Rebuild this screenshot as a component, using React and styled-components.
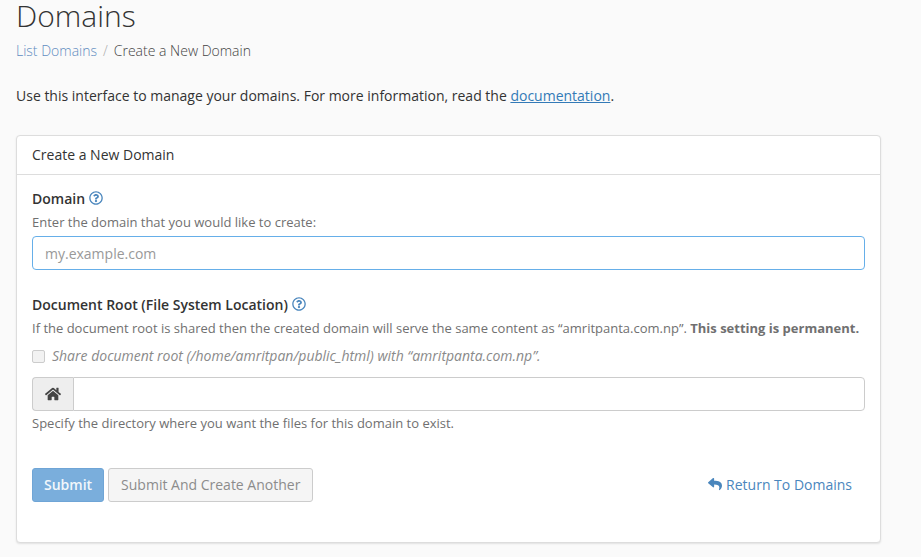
import React from 'react'
import styled, { createGlobalStyle } from 'styled-components'
import { FaHome, FaReply, FaRegQuestionCircle } from 'react-icons/fa'

const GlobalStyle = createGlobalStyle`
  html, body {
    margin: 0;
    padding: 0;
    background: #fafafa;
    overflow: hidden;
  }
  body {
    font-family: "Open Sans", "Liberation Sans", sans-serif;
    font-size: 14px;
    color: #333;
  }
`

const Page = styled.div`
  width: 921px;
  height: 557px;
  box-sizing: border-box;
  padding: 0 40px 0 16px;
  overflow: hidden;
`

const Title = styled.h1`
  margin: 0;
  font-size: 30px;
  line-height: 32px;
  font-weight: 300;
  color: #333;
`

const Breadcrumb = styled.div`
  display: flex;
  margin-top: 9px;
  line-height: 20px;
  font-weight: 300;
  color: #444;
  height: 20px;
`

const Crumb = styled.a`
  color: #5f8cc0;
`

const Slash = styled.span`
  color: #aaa;
  padding: 0 6px;
`

const Intro = styled.p`
  margin: 25px 0 0;
  line-height: 20px;
  color: #333;
`

const DocLink = styled.a`
  color: #337ab7;
  text-decoration: underline;
`

const Card = styled.section`
  margin-top: 29px;
  height: 408px;
  box-sizing: border-box;
  background: #fff;
  border: 1px solid #ddd;
  border-radius: 4px;
  box-shadow: 0 1px 2px rgba(0, 0, 0, 0.1);
`

const CardHeader = styled.header`
  height: 39px;
  box-sizing: border-box;
  padding: 0 15px 2px;
  display: flex;
  align-items: center;
  border-bottom: 1px solid #ddd;
  color: #333;
`

const CardBody = styled.div`
  padding: 13px 15px 0;
`

const Label = styled.label`
  display: flex;
  align-items: center;
  gap: 4px;
  height: 20px;
  font-weight: 600;
  color: #333;
`

const HelpIcon = styled(FaRegQuestionCircle)`
  width: 14px;
  height: 14px;
  color: #4a86bd;
`

const Help = styled.div`
  font-size: 13px;
  line-height: 18px;
  color: #707070;
  margin-top: ${p => p.$top || 0}px;
`

const TextInput = styled.input`
  display: block;
  width: 100%;
  height: 34px;
  box-sizing: border-box;
  padding: 6px 12px;
  font: inherit;
  color: #555;
  background: #fff;
  border: 1px solid ${p => (p.$focused ? '#66afe9' : '#ccc')};
  border-radius: 4px;
  outline: none;
  &::placeholder {
    color: #999;
  }
`

const DomainInput = styled(TextInput)`
  margin-top: 5px;
`

const Section = styled.div`
  margin-top: 24px;
`

const CheckRow = styled.label`
  display: flex;
  align-items: center;
  gap: 7px;
  margin-top: 8px;
  height: 20px;
  font-size: 14px;
  font-style: italic;
  color: #8a8a8a;
`

const CheckBox = styled.input`
  appearance: none;
  margin: 2px 0 0;
  width: 13px;
  height: 13px;
  border: 1px solid #ccc;
  border-radius: 2px;
  background: #f2f2f2;
`

const InputGroup = styled.div`
  display: flex;
  margin-top: 12px;
  height: 34px;
`

const Addon = styled.span`
  flex: none;
  width: 41px;
  box-sizing: border-box;
  display: flex;
  align-items: center;
  justify-content: center;
  color: #444;
  font-size: 16px;
  background: #eee;
  border: 1px solid #ccc;
  border-right: 0;
  border-radius: 4px 0 0 4px;
`

const GroupInput = styled(TextInput)`
  flex: 1;
  border-radius: 0 4px 4px 0;
`

const Actions = styled.div`
  display: flex;
  align-items: center;
  gap: 4px;
  margin-top: 36px;
  padding-right: 13px;
`

const Button = styled.button`
  height: 34px;
  box-sizing: border-box;
  padding: 0 12px 2px;
  font: inherit;
  border-radius: 3px;
`

const PrimaryButton = styled(Button)`
  padding: 0 11px 2px;
  color: #f2f7fb;
  font-weight: 600;
  background: #7aaedc;
  border: 1px solid #6fa5d6;
`

const SecondaryButton = styled(Button)`
  color: #8c8c8c;
  background: #f5f5f5;
  border: 1px solid #ccc;
`

const ReturnLink = styled.a`
  margin-left: auto;
  padding-bottom: 2px;
  display: flex;
  align-items: center;
  gap: 4px;
  color: #4a86bd;
`

export default function App() {
  return (
    <Page>
      <GlobalStyle />
      <Title>Domains</Title>
      <Breadcrumb>
        <Crumb>List Domains</Crumb>
        <Slash>/</Slash>
        <span>Create a New Domain</span>
      </Breadcrumb>
      <Intro>
        Use this interface to manage your domains. For more information, read the{' '}
        <DocLink>documentation</DocLink>.
      </Intro>
      <Card>
        <CardHeader>Create a New Domain</CardHeader>
        <CardBody>
          <Label>
            Domain <HelpIcon />
          </Label>
          <Help $top={5}>Enter the domain that you would like to create:</Help>
          <DomainInput $focused placeholder="my.example.com" />
          <Section>
            <Label>
              Document Root (File System Location) <HelpIcon />
            </Label>
            <Help $top={5}>
              If the document root is shared then the created domain will serve the same content as
              “amritpanta.com.np”. <b>This setting is permanent.</b>
            </Help>
            <CheckRow>
              <CheckBox type="checkbox" disabled />
              Share document root (/home/amritpan/public_html) with “amritpanta.com.np”.
            </CheckRow>
            <InputGroup>
              <Addon>
                <FaHome />
              </Addon>
              <GroupInput />
            </InputGroup>
            <Help $top={3}>Specify the directory where you want the files for this domain to exist.</Help>
          </Section>
          <Actions>
            <PrimaryButton>Submit</PrimaryButton>
            <SecondaryButton>Submit And Create Another</SecondaryButton>
            <ReturnLink>
              <FaReply size={14} />
              Return To Domains
            </ReturnLink>
          </Actions>
        </CardBody>
      </Card>
    </Page>
  )
}
